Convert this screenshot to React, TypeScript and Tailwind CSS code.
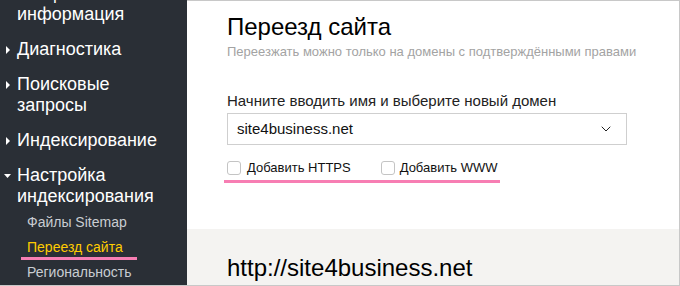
import { ChevronDown } from "lucide-react";

const font = { fontFamily: '"Liberation Sans", Arial, sans-serif' };

function Arrow({ open }: { open?: boolean }) {
  return (
    <svg
      width="8"
      height="8"
      viewBox="0 0 8 8"
      className="absolute left-[4px] top-[7px]"
      fill="#ffffff"
    >
      {open ? <path d="M0 2 L7 2 L3.5 6 Z" /> : <path d="M2 0 L6 4 L2 8 Z" />}
    </svg>
  );
}

function NavItem({ lines, open }: { lines: string[]; open?: boolean }) {
  return (
    <div className="relative pl-[17px] text-[18px] leading-[21px] text-white">
      <Arrow open={open} />
      {lines.map((l) => (
        <div key={l}>{l}</div>
      ))}
    </div>
  );
}

export default function App() {
  return (
    <div
      className="flex h-[286px] w-[680px] overflow-hidden border-b border-r border-[#c8c8c8] bg-white"
      style={font}
    >
      {/* sidebar */}
      <aside className="w-[187px] shrink-0 bg-[#2a2f36]">
        <div className="mt-[-17px] flex flex-col gap-[14px]">
          <div className="pl-[17px] text-[18px] leading-[21px] text-white">
            <div>Общая</div>
            <div>информация</div>
          </div>
          <NavItem lines={["Диагностика"]} />
          <NavItem lines={["Поисковые", "запросы"]} />
          <NavItem lines={["Индексирование"]} />
          <div>
            <NavItem open lines={["Настройка", "индексирования"]} />
            <div className="mt-[3px] flex flex-col pl-[27px] text-[14px] leading-[25px]">
              <span className="text-[#c9cdd2]">Файлы Sitemap</span>
              <span className="relative text-[#ffcc00]">
                Переезд сайта
                <span className="absolute left-[-6px] top-[22px] h-[3px] w-[116px] bg-[#f77eb3]" />
              </span>
              <span className="text-[#c9cdd2]">Региональность</span>
            </div>
          </div>
        </div>
      </aside>

      {/* main */}
      <main className="flex flex-1 flex-col border-t border-[#c8c8c8]">
        <section className="h-[228px] bg-white pl-[40px] pr-[10px] pt-[11px]">
          <h1 className="text-[24px] leading-[30px] text-black">Переезд сайта</h1>
          <p className="mt-[2px] text-[13px] leading-[16px] text-[#a3a3a3]">
            Переезжать можно только на домены с подтверждёнными правами
          </p>
          <label className="mt-[32px] block text-[15px] leading-[18px] text-[#222]">
            Начните вводить имя и выберите новый домен
          </label>
          <div className="mt-[3px] flex h-[32px] w-[400px] items-center justify-between border border-[#cfcfcf] pl-[9px] pr-[12px] text-[15px] text-[#111]">
            <span>site4business.net</span>
            <ChevronDown size={16} strokeWidth={1.5} className="text-[#222]" />
          </div>
          <div className="relative mt-[15px] flex items-center text-[13px] leading-[16px] text-[#111]">
            <span className="mr-[6px] h-[14px] w-[14px] rounded-[3px] border border-[#c4c4c4] bg-white" />
            <span>Добавить HTTPS</span>
            <span className="ml-[30px] mr-[5px] h-[14px] w-[14px] rounded-[3px] border border-[#c4c4c4] bg-white" />
            <span>Добавить WWW</span>
            <span className="absolute left-[-3px] top-[20px] h-[3px] w-[276px] bg-[#f77eb3]" />
          </div>
        </section>
        <section className="flex-1 bg-[#f4f3f1] pl-[40px] pt-[25px]">
          <div className="text-[24px] leading-[28px] text-black">http://site4business.net</div>
        </section>
      </main>
    </div>
  );
}
